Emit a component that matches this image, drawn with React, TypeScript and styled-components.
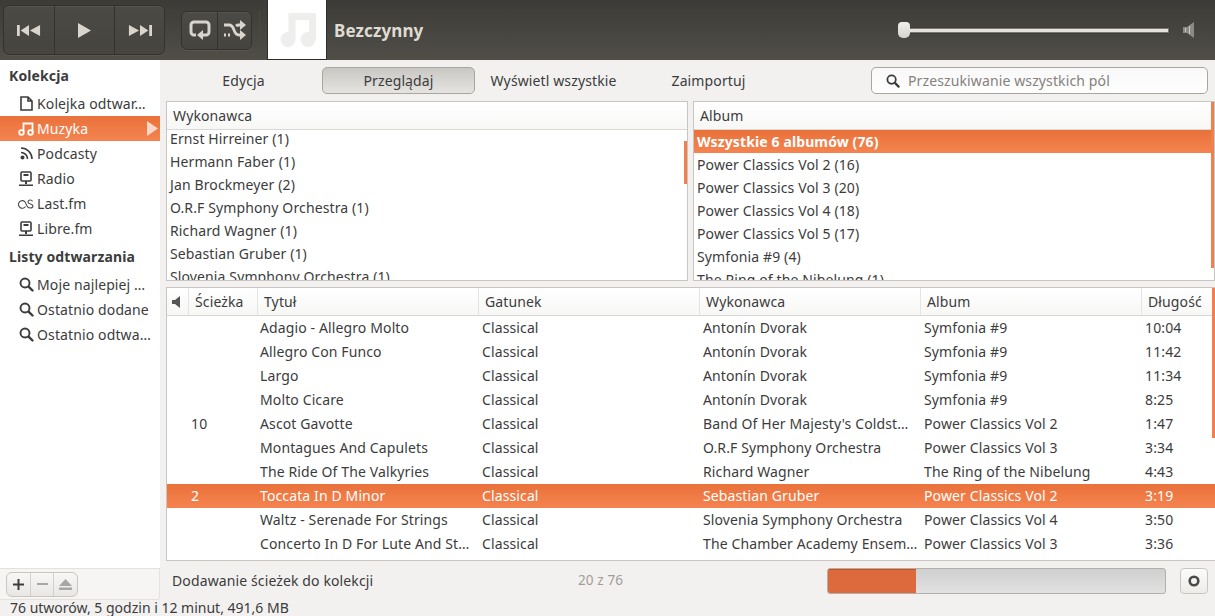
import React from "react";
import styled, { createGlobalStyle } from "styled-components";

const Global = createGlobalStyle`
  html, body { margin: 0; padding: 0; overflow: hidden; background: #f2f1f0; }
  * { box-sizing: border-box; }
`;

const Page = styled.div`
  width: 1215px; height: 616px; display: flex; flex-direction: column; overflow: hidden;
  background: #f2f1f0; color: #3c3c3c; letter-spacing: .12px;
  font: 14px/1 "Noto Sans", "Liberation Sans", sans-serif;
`;
const Toolbar = styled.header`
  height: 60px; flex: none; display: flex; align-items: center; padding-left: 3px;
  background: linear-gradient(#3c3b37, #504e47);
`;
const ButtonGroup = styled.div<{ $h: number; $ml?: number }>`
  display: flex; height: ${p => p.$h}px; margin-left: ${p => p.$ml ?? 0}px;
  border: 1px solid #33322e; border-radius: 6px; overflow: hidden;
  box-shadow: inset 0 1px 0 rgba(255,255,255,.06), 0 1px 0 rgba(255,255,255,.06);
  background: linear-gradient(#4b4a44, #46443e);
`;
const ToolButton = styled.div<{ $w: number }>`
  width: ${p => p.$w}px; display: flex; align-items: center; justify-content: center;
  & + & { border-left: 1px solid #33322e; }
`;
const ToolSep = styled.div`
  width: 1px; height: 38px; margin-left: 7px; background: #4a4943;
`;
const Cover = styled.div`
  width: 60px; height: 60px; margin-left: 7px; background: #fff; border: 1px solid #2e2d29; border-top: 0;
  display: flex; align-items: flex-start; padding: 13px 0 0 12px;
`;
const Idle = styled.div`
  margin-left: 7px; font-size: 17px; font-weight: 700; color: #dfdbd2; flex: 1;
`;
const Volume = styled.div`
  display: flex; align-items: center; width: 271px; position: relative; height: 16px;
`;
const VolTrack = styled.div`
  width: 259px; height: 5px; margin-left: 12px; border-radius: 1px; background: #e6e3dc;
  border: 1px solid #7a7870; border-left: 0;
  box-shadow: 0 0 0 1px rgba(0,0,0,.1);
`;
const VolThumb = styled.div`
  position: absolute; left: 0; top: 0; width: 12px; height: 16px; border-radius: 4px 4px 5px 5px; background: linear-gradient(#f0efec, #d6d4cf);
`;
const Speaker = styled.div`
  margin-left: 14px; margin-right: 20px; display: flex;
`;

const Middle = styled.div`
  flex: 1; display: flex; min-height: 0;
`;
const SideColumn = styled.aside`
  width: 160px; flex: none; display: flex; flex-direction: column;
`;
const SideList = styled.nav`
  flex: 1; background: #fff; padding-top: 5px;
`;
const SideHeading = styled.div<{ $mt?: number }>`
  height: 21px; margin: ${p => p.$mt ?? 0}px 0 5px; padding-left: 9px; display: flex; align-items: center;
  font-weight: 700; color: #3c3c3c;
`;
const SideItem = styled.div<{ $active?: boolean }>`
  height: 25px; padding-left: 18px; display: flex; align-items: center; position: relative;
  color: ${p => (p.$active ? "#fff" : "#3c3c3c")};
  background: ${p => (p.$active ? "linear-gradient(#e9713a, #f58450)" : "none")};
`;
const SideIcon = styled.span`
  width: 16px; height: 16px; display: flex; flex: none; align-items: center; justify-content: center; margin-right: 3px;
`;
const SideLabel = styled.span`
  white-space: nowrap; line-height: 18px;
`;
const ActiveArrow = styled.svg`
  position: absolute; right: 2px; top: 5px;
`;
const SideFooter = styled.div`
  height: 32px; flex: none; background: #f6f5f4; border: 1px solid #e4e2df; border-left: 0; border-bottom-right-radius: 3px;
  padding: 3px 0 0 6px; display: flex;
`;
const MiniGroup = styled.div`
  display: flex; width: 72px; height: 25px; border: 1px solid #c9c6c1; border-radius: 6px; overflow: hidden;
  background: linear-gradient(#f8f7f6, #e9e7e4);
`;
const MiniButton = styled.div`
  flex: 1; display: flex; align-items: center; justify-content: center;
  & + & { border-left: 1px solid #d3d0cc; }
`;

const Main = styled.main`
  flex: 1; display: flex; flex-direction: column; padding-left: 6px; min-width: 0;
`;
const TabsRow = styled.div`
  height: 41px; flex: none; display: flex; align-items: flex-start; padding-top: 7px;
`;
const Tab = styled.div<{ $active?: boolean }>`
  width: ${p => (p.$active ? 153 : 155)}px; height: 27px; display: flex; align-items: center; justify-content: center;
  margin: 0 ${p => (p.$active ? 1 : 0)}px;
  border: 1px solid ${p => (p.$active ? "#a8a6a1" : "transparent")};
  border-radius: 5px; color: #3c3c3c;
  background: ${p => (p.$active ? "linear-gradient(#c9c7c3, #e6e4e1)" : "none")};
`;
const SearchBox = styled.div`
  margin-left: 85px; width: 337px; height: 27px; display: flex; align-items: center; padding-left: 14px;
  background: linear-gradient(#f8f8f8, #fff); border: 1px solid #a8a6a1; border-radius: 5px;
  color: #85817c; gap: 8px;
`;
const Browsers = styled.div`
  height: 180px; flex: none; display: flex; gap: 5px;
`;
const Panel = styled.section<{ $w: number }>`
  width: ${p => p.$w}px; height: 100%; background: #fff; border: 1px solid #c9c6c1; position: relative; overflow: hidden;
`;
const PanelHeader = styled.div`
  height: 28px; padding-left: 6px; display: flex; align-items: center; border-bottom: 1px solid #dad8d4;
  background: linear-gradient(#fff, #f7f7f6);
`;
const PanelList = styled.div<{ $offset?: number }>`
  margin-top: ${p => p.$offset ?? 0}px; position: relative;
`;
const PanelRow = styled.div<{ $sel?: boolean }>`
  height: 23px; padding-left: 3px; display: flex; align-items: center; white-space: nowrap;
  font-weight: ${p => (p.$sel ? 700 : 400)};
  color: ${p => (p.$sel ? "#fff" : "#3c3c3c")};
  background: ${p => (p.$sel ? "linear-gradient(#e9713a, #f58450)" : "none")};
`;
const ScrollMark = styled.div<{ $top: number; $h: number }>`
  position: absolute; right: 0; top: ${p => p.$top}px; width: 3px; height: ${p => p.$h}px; background: #f0814e;
`;
const TrackPanel = styled.section`
  height: 274px; margin-top: 6px; flex: none; background: #fff; border: 1px solid #c9c6c1; border-right: 0; position: relative; overflow: hidden;
`;
const TrackHead = styled.div`
  display: grid; grid-template-columns: 22px 69px 221px 221px 221px 221px 1fr; height: 28px; border-bottom: 1px solid #dad8d4;
  background: linear-gradient(#fff, #f7f7f6);
`;
const HeadCell = styled.div`
  display: flex; align-items: center; padding-left: 6px; border-right: 1px solid #e6e4e1;
  &:first-child { padding-left: 5px; }
  &:last-child { border-right: 0; }
`;
const TrackRow = styled.div<{ $sel?: boolean }>`
  display: grid; grid-template-columns: 21px 69px 221px 221px 221px 221px 1fr; height: 24px; align-items: center;
  color: ${p => (p.$sel ? "#fff" : "#3c3c3c")};
  background: ${p => (p.$sel ? "linear-gradient(#e9713a, #f58450)" : "none")};
`;
const Cell = styled.div<{ $left?: number }>`
  padding-left: ${p => p.$left ?? 4}px; white-space: nowrap; line-height: 18px;
`;
const BottomRow = styled.div`
  flex: 1; display: flex; align-items: flex-start; padding-top: 7px;
`;
const Activity = styled.div`
  width: 412px; height: 26px; padding-left: 6px; display: flex; align-items: center;
`;
const Counter = styled.div`
  width: 249px; height: 26px; display: flex; align-items: center; color: #a09d98; font-size: 13.5px;
`;
const Progress = styled.div`
  width: 339px; height: 26px; border: 1px solid #b3b0ab; border-radius: 3px; overflow: hidden;
  background: linear-gradient(#cfcfcf, #e2e2e2);
`;
const ProgressFill = styled.div`
  height: 100%; background: #dd6a3c; border-top: 1px solid #c9501f;
`;
const StopButton = styled.div`
  width: 28px; height: 26px; margin-left: 14px; border: 1px solid #c9c6c1; border-radius: 4px;
  background: linear-gradient(#fbfbfa, #eeece9); display: flex; align-items: center; justify-content: center;
`;
const StatusLine = styled.footer`
  height: 16px; flex: none; padding-left: 10px; display: flex; align-items: center; color: #3c3c3c; white-space: nowrap; letter-spacing: 0;
`;

const light = "#d9d5cd";
const Prev = () => (
  <svg width="24" height="13" viewBox="0 0 26 14"><path fill={light} d="M0 1h3v12H0zM13 1v12L4 7zM25 1v12L14 7z" /></svg>
);
const Next = () => (
  <svg width="24" height="13" viewBox="0 0 26 14"><path fill={light} d="M1 1v12l11-6zM13 1v12l9-6zM23 1h3v12h-3z" /></svg>
);
const Play = () => (
  <svg width="15" height="17" viewBox="0 0 15 17"><path fill={light} d="M1 1l13 7.5L1 16z" /></svg>
);
const RepeatIcon = () => (
  <svg width="22" height="22" viewBox="0 0 22 22" fill="none">
    <path stroke={light} strokeWidth="3" d="M7 16H5a3 3 0 0 1-3-3V6a3 3 0 0 1 3-3h12a3 3 0 0 1 3 3v7a3 3 0 0 1-3 3h-5" />
    <path fill={light} d="M14 11v10l-6-5z" />
  </svg>
);
const ShuffleIcon = () => (
  <svg width="22" height="20" viewBox="0 0 22 20" fill="none">
    <path stroke={light} strokeWidth="2.800" d="M0 5h5c3 0 4 2 5 5s2 5 5 5h2M12 6c1-1 2-1 3-1h2M0 15h2M4 15h2" />
    <path fill={light} d="M16 0l6 5-6 5zM16 10l6 5-6 5z" />
  </svg>
);
const NoteBig = () => (
  <svg width="36" height="34" viewBox="0 0 36 34">
    <path fill="#eeeeec" d="M8.500 0H36V27h-7V7H15.500V27h-7z" />
    <circle cx="8" cy="26.500" r="7.500" fill="#eeeeec" />
    <circle cx="28" cy="26.500" r="7.500" fill="#eeeeec" />
  </svg>
);
const SpeakerGlyph = () => (
  <svg width="12" height="16" viewBox="0 0 12 16"><path fill="#8c8a84" d="M0 5h4l7-5v16l-7-5H0z" /><path fill="#c8c6c0" d="M2 6h1v4H2zM6 4h1v8H6z" /></svg>
);
const stroke = "#3c3c3c";
const DocIcon = () => (
  <svg width="13" height="15" viewBox="0 0 13 15" fill="none"><path stroke={stroke} strokeWidth="1.600" d="M1 1h7l4 4v9H1zM8 1v4h4" /></svg>
);
const NoteIcon = ({ c }: { c: string }) => (
  <svg width="16" height="14" viewBox="0 0 16 14" fill="none">
    <path stroke={c} strokeWidth="1.800" d="M5.500 10V1.500h9V10" />
    <circle cx="3.500" cy="10.500" r="2.300" stroke={c} strokeWidth="1.800" />
    <circle cx="12.500" cy="10.500" r="2.300" stroke={c} strokeWidth="1.800" />
  </svg>
);
const RssIcon = () => (
  <svg width="13" height="13" viewBox="0 0 13 13" fill="none"><circle cx="2.500" cy="10.500" r="2" fill={stroke} /><path stroke={stroke} strokeWidth="1.600" d="M1 5.500a6.500 6.500 0 0 1 6.500 6.500M1 1a11 11 0 0 1 11 11" /></svg>
);
const RadioIcon = () => (
  <svg width="14" height="16" viewBox="0 0 14 16" fill="none"><rect x="2" y="1" width="10" height="9" rx="1" stroke={stroke} strokeWidth="1.600" /><path fill={stroke} d="M4.500 3h5v2h-5zM6 10h2v3H6zM0 13.500h14V15H0z" /></svg>
);
const LastfmIcon = () => (
  <svg width="16" height="10" viewBox="0 0 16 10" fill="none"><path stroke="#4c4c4c" strokeWidth="1.100" d="M7.500 7.500A3.800 3.800 0 1 1 7 2.800L9 7c.6 1.300 1.500 2 3 2 1.500 0 3-.8 3-2 0-2.500-5-1.500-5-4 0-1 .9-2 2.300-2 1 0 1.900.5 2.200 1.400" /></svg>
);
const SearchIcon = ({ size = 15 }: { size?: number }) => (
  <svg width={size} height={size} viewBox="0 0 15 15" fill="none"><circle cx="6" cy="6" r="4.500" stroke={stroke} strokeWidth="1.900" /><path stroke={stroke} strokeWidth="2.400" strokeLinecap="round" d="M9.800 9.800L13.500 13.500" /></svg>
);
const Plus = () => <svg width="11" height="11" viewBox="0 0 11 11"><path fill="#3c3c3c" d="M4.500 0h2v4.500H11v2H6.500V11h-2V6.500H0v-2h4.500z" /></svg>;
const Minus = () => <svg width="11" height="3" viewBox="0 0 11 3"><path fill="#a8a6a2" d="M0 0h11v2H0z" /></svg>;
const Eject = () => <svg width="13" height="11" viewBox="0 0 13 11"><path fill="#a8a6a2" d="M6.500 0L13 7H0zM0 8.500h13V11H0z" /></svg>;

const artists = ["Ernst Hirreiner (1)", "Hermann Faber (1)", "Jan Brockmeyer (2)", "O.R.F Symphony Orchestra (1)", "Richard Wagner (1)", "Sebastian Gruber (1)", "Slovenia Symphony Orchestra (1)"];
const albums = ["Power Classics Vol 2 (16)", "Power Classics Vol 3 (20)", "Power Classics Vol 4 (18)", "Power Classics Vol 5 (17)", "Symfonia #9 (4)", "The Ring of the Nibelung (1)"];
const tracks = [
  ["", "Adagio - Allegro Molto", "Antonín Dvorak", "Symfonia #9", "10:04"],
  ["", "Allegro Con Funco", "Antonín Dvorak", "Symfonia #9", "11:42"],
  ["", "Largo", "Antonín Dvorak", "Symfonia #9", "11:34"],
  ["", "Molto Cicare", "Antonín Dvorak", "Symfonia #9", "8:25"],
  ["10", "Ascot Gavotte", "Band Of Her Majesty's Coldst…", "Power Classics Vol 2", "1:47"],
  ["", "Montagues And Capulets", "O.R.F Symphony Orchestra", "Power Classics Vol 3", "3:34"],
  ["", "The Ride Of The Valkyries", "Richard Wagner", "The Ring of the Nibelung", "4:43"],
  ["2", "Toccata In D Minor", "Sebastian Gruber", "Power Classics Vol 2", "3:19"],
  ["", "Waltz - Serenade For Strings", "Slovenia Symphony Orchestra", "Power Classics Vol 4", "3:50"],
  ["", "Concerto In D For Lute And St…", "The Chamber Academy Ensem…", "Power Classics Vol 3", "3:36"],
];

export default function App() {
  return (
    <Page>
      <Global />
      <Toolbar>
        <ButtonGroup $h={50}>
          <ToolButton $w={50}><Prev /></ToolButton>
          <ToolButton $w={60}><Play /></ToolButton>
          <ToolButton $w={50}><Next /></ToolButton>
        </ButtonGroup>
        <ButtonGroup $h={39} $ml={16}>
          <ToolButton $w={35}><RepeatIcon /></ToolButton>
          <ToolButton $w={34}><ShuffleIcon /></ToolButton>
        </ButtonGroup>
        <ToolSep />
        <Cover><NoteBig /></Cover>
        <Idle>Bezczynny</Idle>
        <Volume><VolThumb /><VolTrack /></Volume>
        <Speaker><SpeakerGlyph /></Speaker>
      </Toolbar>
      <Middle>
        <SideColumn>
          <SideList>
            <SideHeading>Kolekcja</SideHeading>
            <SideItem><SideIcon><DocIcon /></SideIcon><SideLabel>Kolejka odtwar…</SideLabel></SideItem>
            <SideItem $active>
              <SideIcon><NoteIcon c="#fff" /></SideIcon><SideLabel>Muzyka</SideLabel>
              <ActiveArrow width="11" height="15" viewBox="0 0 11 15"><path fill="#f8d9c9" d="M0 0l11 7.500L0 15z" /></ActiveArrow>
            </SideItem>
            <SideItem><SideIcon><RssIcon /></SideIcon><SideLabel>Podcasty</SideLabel></SideItem>
            <SideItem><SideIcon><RadioIcon /></SideIcon><SideLabel>Radio</SideLabel></SideItem>
            <SideItem><SideIcon><LastfmIcon /></SideIcon><SideLabel>Last.fm</SideLabel></SideItem>
            <SideItem><SideIcon><RadioIcon /></SideIcon><SideLabel>Libre.fm</SideLabel></SideItem>
            <SideHeading $mt={5}>Listy odtwarzania</SideHeading>
            <SideItem><SideIcon><SearchIcon /></SideIcon><SideLabel>Moje najlepiej …</SideLabel></SideItem>
            <SideItem><SideIcon><SearchIcon /></SideIcon><SideLabel>Ostatnio dodane</SideLabel></SideItem>
            <SideItem><SideIcon><SearchIcon /></SideIcon><SideLabel>Ostatnio odtwa…</SideLabel></SideItem>
          </SideList>
          <SideFooter>
            <MiniGroup>
              <MiniButton><Plus /></MiniButton>
              <MiniButton><Minus /></MiniButton>
              <MiniButton><Eject /></MiniButton>
            </MiniGroup>
          </SideFooter>
        </SideColumn>
        <Main>
          <TabsRow>
            <Tab>Edycja</Tab>
            <Tab $active>Przeglądaj</Tab>
            <Tab>Wyświetl wszystkie</Tab>
            <Tab>Zaimportuj</Tab>
            <SearchBox><SearchIcon size={14} />Przeszukiwanie wszystkich pól</SearchBox>
          </TabsRow>
          <Browsers>
            <Panel $w={522}>
              <PanelHeader>Wykonawca</PanelHeader>
              <PanelList $offset={-3}>
                {artists.map(a => <PanelRow key={a}>{a}</PanelRow>)}
              </PanelList>
              <ScrollMark $top={39} $h={43} />
            </Panel>
            <Panel $w={522}>
              <PanelHeader>Album</PanelHeader>
              <PanelList>
                <PanelRow $sel>Wszystkie 6 albumów (76)</PanelRow>
                {albums.map(a => <PanelRow key={a}>{a}</PanelRow>)}
              </PanelList>
              <ScrollMark $top={0} $h={166} />
            </Panel>
          </Browsers>
          <TrackPanel>
            <TrackHead>
              <HeadCell><svg width="9" height="12" viewBox="0 0 9 12"><path fill="#555" d="M0 4h3l5-4v12L3 8H0z" /></svg></HeadCell>
              <HeadCell>Ścieżka</HeadCell>
              <HeadCell>Tytuł</HeadCell>
              <HeadCell>Gatunek</HeadCell>
              <HeadCell>Wykonawca</HeadCell>
              <HeadCell>Album</HeadCell>
              <HeadCell>Długość</HeadCell>
            </TrackHead>
            {tracks.map(t => (
              <TrackRow key={t[1]} $sel={t[1].startsWith("Toccata")}>
                <Cell />
                <Cell $left={3}>{t[0]}</Cell>
                <Cell $left={3}>{t[1]}</Cell>
                <Cell>Classical</Cell>
                <Cell>{t[2]}</Cell>
                <Cell>{t[3]}</Cell>
                <Cell>{t[4]}</Cell>
              </TrackRow>
            ))}
            <ScrollMark $top={0} $h={150} />
          </TrackPanel>
          <BottomRow>
            <Activity>Dodawanie ścieżek do kolekcji</Activity>
            <Counter>20 z 76</Counter>
            <Progress><ProgressFill style={{ width: `${(89 / 339) * 100}%` }} /></Progress>
            <StopButton>
              <svg width="12" height="12" viewBox="0 0 12 12"><circle cx="6" cy="6" r="4.300" fill="none" stroke="#4a4a48" strokeWidth="2.600" /></svg>
            </StopButton>
          </BottomRow>
        </Main>
      </Middle>
      <StatusLine>76 utworów, 5 godzin i 12 minut, 491,6 MB</StatusLine>
    </Page>
  );
}
